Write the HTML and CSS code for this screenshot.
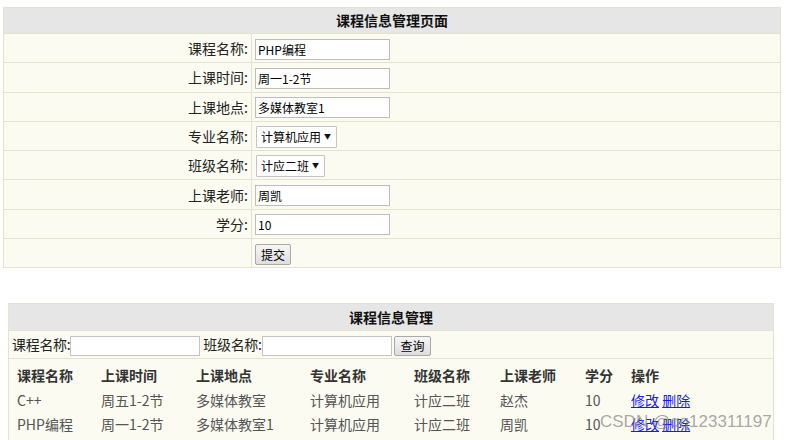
FILE: index.html
```html
<!DOCTYPE html>
<html lang="zh-CN">
<head>
<meta charset="utf-8">
<title>课程信息管理页面</title>
<link rel="stylesheet" href="styles.css">
</head>
<body>
<div class="page">
  <table class="form-table">
    <tr><th colspan="2" class="title">课程信息管理页面</th></tr>
    <tr><td class="lbl">课程名称:</td><td class="val"><input class="txt" type="text" value="PHP编程"></td></tr>
    <tr><td class="lbl">上课时间:</td><td class="val"><input class="txt" type="text" value="周一1-2节"></td></tr>
    <tr><td class="lbl">上课地点:</td><td class="val"><input class="txt" type="text" value="多媒体教室1"></td></tr>
    <tr><td class="lbl">专业名称:</td><td class="val"><span class="sel sel-major"><select><option>计算机应用</option></select></span></td></tr>
    <tr><td class="lbl">班级名称:</td><td class="val"><span class="sel sel-class"><select><option>计应二班</option></select></span></td></tr>
    <tr><td class="lbl">上课老师:</td><td class="val"><input class="txt" type="text" value="周凯"></td></tr>
    <tr><td class="lbl">学分:</td><td class="val"><input class="txt" type="text" value="10"></td></tr>
    <tr><td class="lbl"></td><td class="val"><button class="btn">提交</button></td></tr>
  </table>

  <table class="list-table">
    <tr><th class="title">课程信息管理</th></tr>
    <tr><td class="search">课程名称:<input class="stxt" type="text"> 班级名称:<input class="stxt" type="text"> <button class="btn btn-q">查询</button></td></tr>
    <tr>
      <td class="list-cell">
        <table class="data">
          <tr class="head">
            <th class="c1">课程名称</th><th class="c2">上课时间</th><th class="c3">上课地点</th><th class="c4">专业名称</th><th class="c5">班级名称</th><th class="c6">上课老师</th><th class="c7">学分</th><th class="c8">操作</th>
          </tr>
          <tr>
            <td>C++</td><td>周五1-2节</td><td>多媒体教室</td><td>计算机应用</td><td>计应二班</td><td>赵杰</td><td>10</td><td><a href="#">修改</a> <a href="#">删除</a></td>
          </tr>
          <tr>
            <td>PHP编程</td><td>周一1-2节</td><td>多媒体教室1</td><td>计算机应用</td><td>计应二班</td><td>周凯</td><td>10</td><td><a href="#">修改</a> <a href="#">删除</a></td>
          </tr>
        </table>
      </td>
    </tr>
  </table>
  <div class="watermark">CSDN @qq123311197</div>
</div>
</body>
</html>
```

FILE: styles.css
```css
html, body {
  margin: 0;
  padding: 0;
  background: #ffffff;
}
body {
  font-family: "Noto Sans CJK SC", "Liberation Sans", sans-serif;
  font-size: 14px;
  color: #222;
  overflow: hidden;
}
.page {
  position: relative;
  padding: 7px 0 0 3px;
  height: 433px;
}
table {
  border-collapse: collapse;
}
.form-table {
  width: 778px;
  border: 1px solid #e4e4cc;
}
.form-table th, .form-table td {
  border: 1px solid #e4e4cc;
  padding: 0;
}
.title {
  background: #e6e6e6;
  font-size: 14px;
  font-weight: bold;
  color: #111;
  height: 25px;
  line-height: 25px;
  text-align: center;
}
.form-table td {
  background: #fbfbf1;
  height: 28.3px;
  line-height: 20px;
}
.lbl {
  width: 244px;
  text-align: right;
  padding-right: 3px !important;
  color: #222;
}
.val {
  padding-left: 3px !important;
}
.txt {
  box-sizing: border-box;
  width: 135px;
  height: 21px;
  border: 1px solid #bdbdbd;
  padding: 0 2px;
  margin: 0;
  font-family: "Noto Sans CJK SC", "Liberation Sans", sans-serif;
  font-size: 12px;
  color: #000;
  background: #fff;
  vertical-align: middle;
}
.sel {
  position: relative;
  display: inline-block;
  vertical-align: middle;
}
.sel select {
  appearance: none;
  -webkit-appearance: none;
  box-sizing: border-box;
  height: 22px;
  border: 1px solid #c4c4c4;
  border-radius: 1px;
  background: #fff;
  padding: 0 14px 0 4px;
  margin: 0 0 0 1px;
  font-family: "Noto Sans CJK SC", "Liberation Sans", sans-serif;
  font-size: 12px;
  color: #000;
}
.sel-major select { width: 81px; }
.sel-class select { width: 69px; }
.sel::after {
  content: "▼";
  position: absolute;
  right: 6px;
  top: 6px;
  font-size: 7px;
  line-height: 8px;
  color: #111;
  pointer-events: none;
}
.btn {
  box-sizing: border-box;
  height: 21px;
  padding: 0 5px;
  margin: 0;
  border: 1px solid #a9a9a9;
  border-radius: 2px;
  background: linear-gradient(#f6f6f6, #dedede);
  font-family: "Noto Sans CJK SC", "Liberation Sans", sans-serif;
  font-size: 12px;
  color: #000;
  vertical-align: middle;
  line-height: 17px;
}
.list-table {
  width: 766px;
  margin: 35px 0 0 5px;
  border: 1px solid #e4e4cc;
}
.list-table > tbody > tr > th, .list-table > tbody > tr > td {
  border: 1px solid #e4e4cc;
  padding: 0;
}
.list-table .title {
  height: 26px;
  line-height: 26px;
}
.search {
  background: #fbfbf1;
  height: 27px;
  padding-left: 3px !important;
  font-size: 14px;
  letter-spacing: -0.3px;
  color: #222;
  white-space: nowrap;
}
.stxt {
  box-sizing: border-box;
  width: 130px;
  height: 20px;
  border: 1px solid #c4c4c4;
  margin: 0;
  padding: 0 2px;
  vertical-align: middle;
  background: #fff;
}
.btn-q {
  margin-left: 0;
  height: 20px;
  letter-spacing: 0;
}
.list-cell {
  background: #fbfbf1;
  padding: 3px 0 0 4px !important;
  vertical-align: top;
  height: 82px;
}
.data th, .data td {
  padding: 0 4px;
  text-align: left;
  height: 24px;
  line-height: 24px;
  white-space: nowrap;
}
.data th {
  font-weight: bold;
  color: #333;
  font-size: 14px;
  height: 26px;
}
.data td {
  color: #555;
  font-size: 14px;
}
.c1 { width: 76px; }
.c2 { width: 87px; }
.c3 { width: 106px; }
.c4 { width: 96px; }
.c5 { width: 78px; }
.c6 { width: 77px; }
.c7 { width: 38px; }
.c8 { width: 80px; }
.data a {
  color: #1a1aee;
  text-decoration: underline;
}
.watermark {
  position: absolute;
  left: 600px;
  top: 412px;
  font-family: "Liberation Sans", sans-serif;
  font-size: 17px;
  color: rgba(120, 120, 120, 0.65);
  white-space: nowrap;
  pointer-events: none;
}
```
